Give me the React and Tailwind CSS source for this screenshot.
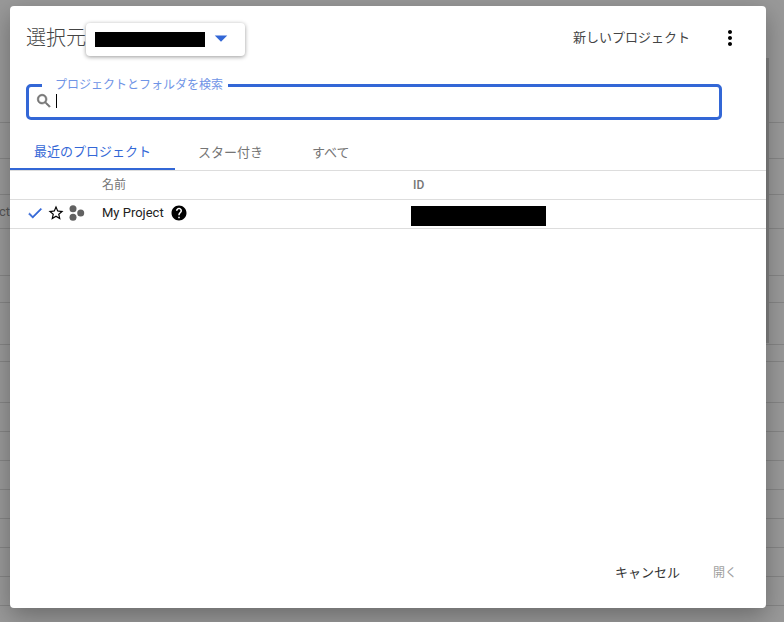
import React from 'react'

const rowHeights = [123, 36, 36, 34, 47, 27, 42, 17, 41, 29, 29, 29, 29, 29, 29, 29]

const Icon = ({ d, className }) => (
  <svg viewBox="0 0 24 24" fill="currentColor" className={className}>
    <path d={d} />
  </svg>
)

const Backdrop = () => (
  <div className="flex flex-col">
    {rowHeights.map((h, i) => (
      <div key={i} className="border-b border-[#858585]" style={{ height: h }} />
    ))}
  </div>
)

const App = () => {
  return (
    <div className="relative w-[784px] h-[622px] overflow-hidden bg-[#999999] font-['Roboto','Noto_Sans_CJK_JP',sans-serif]">
      <Backdrop />
      <div className="absolute left-0 top-[204px] text-[13px] leading-4 text-[#555] w-[10px] overflow-hidden flex justify-end">
        ct
      </div>
      <div className="absolute left-[766px] top-[58px] w-[3px] h-[285px] bg-[#808080]" />

      {/* dialog */}
      <div className="absolute left-[10px] top-[6px] w-[756px] h-[602px] bg-white rounded-[4px] shadow-[0_8px_24px_rgba(0,0,0,0.3)] flex flex-col">
        {/* header */}
        <div className="flex items-center h-[50px] mt-[8px] pl-[16px] pr-[24px]">
          <span className="text-[20px] font-light text-[#444] w-[60px] whitespace-nowrap -mt-[3px]">選択元</span>
          <div className="flex items-center w-[159px] h-[33px] bg-white rounded-[4px] shadow-[0_1px_4px_rgba(0,0,0,0.4)] pl-[9px]">
            <div className="w-[110px] h-[15px] bg-black" />
            <Icon d="M7 10l5 5 5-5z" className="w-[30px] h-[30px] ml-[1px] -mt-[3px] text-[#3367d6]" />
          </div>
          <span className="ml-auto text-[13px] text-[#444] whitespace-nowrap -mt-[3px]">新しいプロジェクト</span>
          <Icon
            d="M12 8c1.1 0 2-.9 2-2s-.9-2-2-2-2 .9-2 2 .9 2 2 2zm0 2c-1.1 0-2 .9-2 2s.9 2 2 2 2-.9 2-2-.9-2-2-2zm0 6c-1.1 0-2 .9-2 2s.9 2 2 2 2-.9 2-2-.9-2-2-2z"
            className="w-6 h-6 ml-[28px] text-black -mt-[3px]"
          />
        </div>

        {/* search */}
        <div className="relative mx-[16px] mt-[20px] h-[36px] w-[696px] border-[3px] border-[#3367d6] rounded-[5px] flex items-center pl-[6px]">
          <span className="absolute left-[13px] -top-[10px] bg-white pl-[13px] pr-[5px] text-[12px] leading-4 text-[#6f94e6] whitespace-nowrap">
            プロジェクトとフォルダを検索
          </span>
          <Icon
            d="M15.5 14h-.79l-.28-.27C15.41 12.59 16 11.11 16 9.5 16 5.91 13.09 3 9.5 3S3 5.91 3 9.5 5.91 16 9.5 16c1.61 0 3.09-.59 4.23-1.57l.27.28v.79l5 4.99L20.49 19l-4.99-5zm-6 0C7.01 14 5 11.99 5 9.5S7.01 5 9.5 5 14 7.01 14 9.5 11.99 14 9.5 14z"
            className="w-[18px] h-[18px] text-[#757575] -mt-[3px] stroke-current stroke-[0.8]"
          />
          <div className="w-px h-[14px] bg-black ml-[3px] -mt-[2px]" />
        </div>

        {/* tabs */}
        <div className="flex h-[34px] mt-[17px] border-b border-[#dddddd] text-[13px]">
          <div className="w-[165px] h-[33px] pb-[2px] flex items-center justify-center border-b-[2px] border-[#3367d6] text-[#3367d6]">
            最近のプロジェクト
          </div>
          <div className="h-[33px] pb-[2px] flex items-center ml-[23px] text-[#757575]">スター付き</div>
          <div className="h-[33px] pb-[2px] flex items-center ml-[49px] text-[#757575]">すべて</div>
        </div>

        {/* table */}
        <div className="flex items-center h-[29px] border-b border-[#dddddd] text-[12px] text-[#757575]">
          <span className="w-[403px] pl-[92px]">名前</span>
          <span className="font-medium">ID</span>
        </div>
        <div className="flex items-center h-[29px] pb-[2px] border-b border-[#dddddd]">
          <Icon
            d="M9 16.17L4.83 12l-1.42 1.41L9 19 21 7l-1.41-1.41z"
            className="w-[18px] h-[18px] ml-[16px] text-[#3367d6] stroke-current stroke-[0.6]"
          />
          <Icon
            d="M22 9.24l-7.19-.62L12 2 9.19 8.63 2 9.24l5.46 4.73L5.82 21 12 17.27 18.18 21l-1.63-7.03L22 9.24zM12 15.4l-3.76 2.27 1-4.28-3.32-2.88 4.38-.38L12 6.1l1.71 4.04 4.38.38-3.32 2.88 1 4.28L12 15.4z"
            className="w-[18px] h-[18px] ml-[3px] text-black"
          />
          <svg viewBox="0 0 16 16" fill="#616161" className="w-4 h-4 ml-[4px]">
            <circle cx="4" cy="3.8" r="3.5" />
            <circle cx="4" cy="12.2" r="3.5" />
            <circle cx="11.7" cy="8" r="3.5" />
          </svg>
          <span className="ml-[17px] text-[13px] text-[#212121]">My Project</span>
          <Icon
            d="M12 2C6.48 2 2 6.48 2 12s4.48 10 10 10 10-4.48 10-10S17.52 2 12 2zm1 17h-2v-2h2v2zm2.07-7.75l-.9.92C13.45 12.9 13 13.5 13 15h-2v-.5c0-1.1.45-2.1 1.17-2.83l1.24-1.26c.37-.36.59-.86.59-1.41 0-1.1-.9-2-2-2s-2 .9-2 2H8c0-2.21 1.79-4 4-4s4 1.79 4 4c0 .88-.36 1.68-.93 2.25z"
            className="w-[18px] h-[18px] ml-[6px] text-black"
          />
          <div className="w-[135px] h-[20px] bg-black ml-[223px] mt-[5px]" />
        </div>

        {/* footer */}
        <div className="mt-auto flex justify-end items-center h-[30px] mb-[20px] pr-[29px] text-[13px]">
          <span className="text-[#333]">キャンセル</span>
          <span className="ml-[33px] text-[12px] text-[#a0a0a0]">開く</span>
        </div>
      </div>
    </div>
  )
}

export default App
